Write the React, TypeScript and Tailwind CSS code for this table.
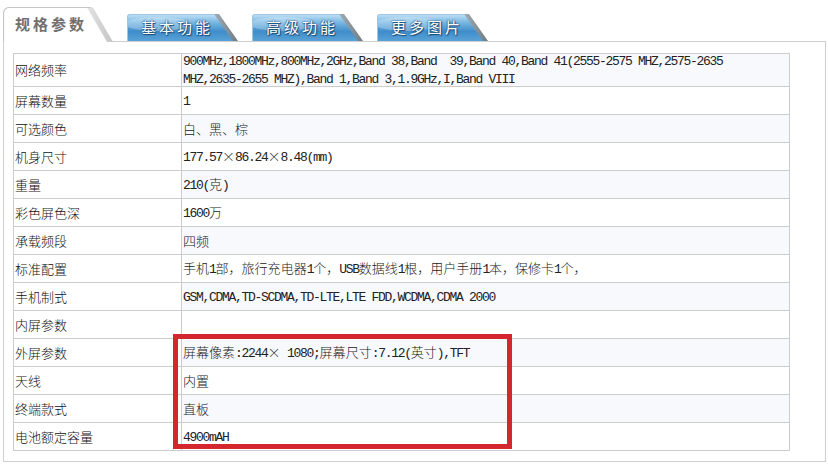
import React from "react";

const rows: { label: string; value: string[] }[] = [
  {
    label: "网络频率",
    value: [
      "900MHz,1800MHz,800MHz,2GHz,Band 38,Band  39,Band 40,Band 41(2555-2575 MHZ,2575-2635",
      "MHZ,2635-2655 MHZ),Band 1,Band 3,1.9GHz,I,Band VIII",
    ],
  },
  { label: "屏幕数量", value: ["1"] },
  { label: "可选颜色", value: ["白、黑、棕"] },
  { label: "机身尺寸", value: ["177.57×86.24×8.48(mm)"] },
  { label: "重量", value: ["210(克)"] },
  { label: "彩色屏色深", value: ["1600万"] },
  { label: "承载频段", value: ["四频"] },
  { label: "标准配置", value: ["手机1部，旅行充电器1个，USB数据线1根，用户手册1本，保修卡1个，"] },
  { label: "手机制式", value: ["GSM,CDMA,TD-SCDMA,TD-LTE,LTE FDD,WCDMA,CDMA 2000"] },
  { label: "内屏参数", value: [""] },
  { label: "外屏参数", value: ["屏幕像素:2244× 1080;屏幕尺寸:7.12(英寸),TFT"] },
  { label: "天线", value: ["内置"] },
  { label: "终端款式", value: ["直板"] },
  { label: "电池额定容量", value: ["4900mAH"] },
];

function Mixed({ text }: { text: string }) {
  const parts = text.match(/[\x20-\x7e]+|[^\x20-\x7e]+/g) || [];
  return (
    <>
      {parts.map((p, i) =>
        /^[\x20-\x7e]/.test(p) ? (
          <span key={i} className="font-['Liberation_Mono',monospace] tracking-[-1.3px] whitespace-pre">
            {p}
          </span>
        ) : (
          <span key={i} className="font-['Noto_Sans_CJK_SC',sans-serif] font-light">
            {Array.from(p).map((ch, j) =>
              ch === "×" ? (
                <span key={j} className="inline-block w-[13px] text-center">
                  ×
                </span>
              ) : (
                <React.Fragment key={j}>{ch}</React.Fragment>
              )
            )}
          </span>
        )
      )}
    </>
  );
}

function ActiveTab({ label }: { label: string }) {
  return (
    <div className="relative z-10 -mb-px h-[35px] w-[110px] shrink-0">
      <svg className="absolute inset-0" width="110" height="35" viewBox="0 0 110 35">
        <defs>
          <linearGradient id="slantA" x1="0" y1="0" x2="1" y2="0">
            <stop offset="0" stopColor="#e4e4e4" />
            <stop offset="1" stopColor="#c4c4c4" />
          </linearGradient>
        </defs>
        <path d="M0.5,35 V7 Q0.5,0.5 7,0.5 H84 L107,35 Z" fill="#ffffff" />
        <polygon points="84,0.5 90,0.5 110,35 104,35" fill="url(#slantA)" />
        <path d="M0.5,35 V7 Q0.5,0.5 7,0.5 H88" fill="none" stroke="#c6c6c6" strokeWidth="1.2" />
      </svg>
      <div className="absolute left-[12px] top-[7px] font-['Noto_Sans_CJK_SC',sans-serif] text-[15px] font-bold leading-[20px] tracking-[3px] text-[#707070]">
        {label}
      </div>
    </div>
  );
}

function BlueTab({ label, id }: { label: string; id: string }) {
  return (
    <div className="relative h-[27px] w-[111px] shrink-0">
      <svg className="absolute inset-0" width="111" height="27" viewBox="0 0 111 27">
        <defs>
          <linearGradient id={`g${id}`} x1="0" y1="0" x2="0" y2="1">
            <stop offset="0" stopColor="#c6e3f6" />
            <stop offset="0.3" stopColor="#7ab9e3" />
            <stop offset="0.65" stopColor="#3f8dca" />
            <stop offset="1" stopColor="#5aa2d6" />
          </linearGradient>
          <linearGradient id={`s${id}`} x1="0" y1="0" x2="1" y2="0">
            <stop offset="0" stopColor="#a0abb2" />
            <stop offset="1" stopColor="#6f7c85" />
          </linearGradient>
        </defs>
        <path d="M0,27 V3 Q0,0 3,0 H88 L107,27 Z" fill={`url(#g${id})`} />
        <ellipse cx="30" cy="10" rx="32" ry="7" fill="#ffffff" opacity="0.25" />
        <polygon points="87,0 92,0 111,27 106,27" fill={`url(#s${id})`} />
        <path d="M0.5,27 V3 Q0.5,0.5 3,0.5 H88" fill="none" stroke="#9cc6e4" strokeWidth="1" />
      </svg>
      <div className="absolute left-[14px] top-[3px] font-['Noto_Sans_CJK_SC',sans-serif] text-[15px] leading-[20px] tracking-[3px] text-white [text-shadow:0_0_2px_#1c4c78,0_0_1px_#1c4c78,1px_1px_1px_#1c4c78]">
        {label}
      </div>
    </div>
  );
}

export default function App() {
  return (
    <div className="relative h-[466px] w-[828px] overflow-hidden bg-white text-[13px] text-[#222]">
      <div className="flex h-[41px] items-end gap-[14px] pl-[3px]">
        <ActiveTab label="规格参数" />
        <BlueTab id="a" label="基本功能" />
        <BlueTab id="b" label="高级功能" />
        <BlueTab id="c" label="更多图片" />
      </div>
      <div className="ml-[3px] h-[421px] w-[823px] border border-[#cfcfcf] pl-[9px] pt-[11px]">
        <div className="w-[777px] border-l border-t border-[#cccccc]">
          {rows.map((r, i) => (
            <div
              key={i}
              className={`flex border-b border-[#cccccc] ${i === 0 ? "h-[33px]" : "h-[28px]"}`}
            >
              <div className="flex w-[168px] shrink-0 items-center border-r border-[#cccccc] pl-[1px] font-['Noto_Sans_CJK_SC',sans-serif] font-light text-[13px] leading-[16px] text-[#111]">
                {r.label}
              </div>
              <div
                className={`flex flex-1 flex-col justify-center border-r border-[#cccccc] pl-[1px] text-[13px] leading-[16px] text-[#222] ${
                  i % 2 === 0 ? "bg-[#f7f9fc]" : "bg-white"
                }`}
              >
                {r.value.map((line, k) => (
                  <div key={k} className="whitespace-nowrap">
                    <Mixed text={line} />
                  </div>
                ))}
              </div>
            </div>
          ))}
        </div>
      </div>
      <div className="absolute left-[173px] top-[334px] h-[115px] w-[339px] border-[5px] border-[#d3262e]" />
    </div>
  );
}
